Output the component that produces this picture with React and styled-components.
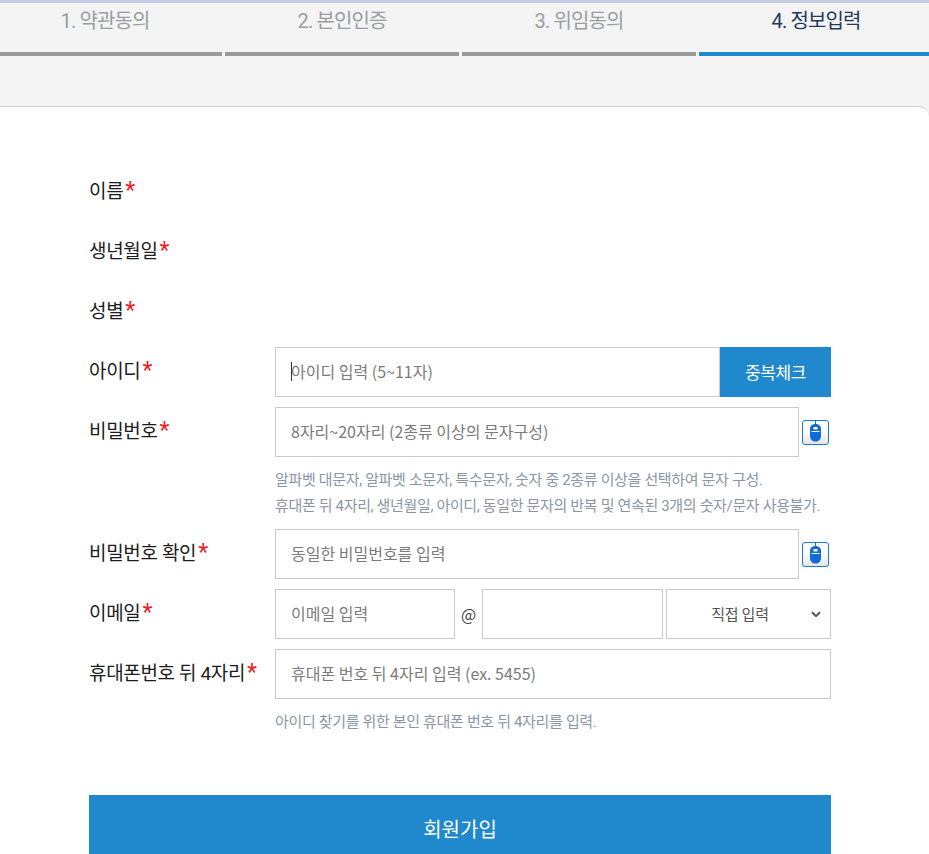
import React from "react";
import styled, { createGlobalStyle } from "styled-components";

const Global = createGlobalStyle`
  html, body { margin: 0; padding: 0; height: 854px; overflow: hidden; background: #fff; }
  * { box-sizing: border-box; }
  #root { height: 854px; overflow: hidden; }
`;

const sans = `Roboto, "Noto Sans CJK KR", sans-serif`;
const field = `"Noto Sans CJK KR", "Noto Sans", sans-serif`;

const Page = styled.div`
  width: 929px;
  height: 854px;
  overflow: hidden;
  background: #f4f4f4;
  border-top: 3px solid #c5cfe3;
  font-family: ${sans};
`;
const Steps = styled.ol`
  display: grid;
  grid-template-columns: repeat(4, 234px);
  gap: 3px;
  margin: 0 0 0 -12px;
  padding: 0;
  list-style: none;
  width: 945px;
`;
const Step = styled.li`
  height: 53px;
  padding-top: 3px;
  border-bottom: 4px solid ${(p) => (p.$active ? "#2088cc" : "#97999b")};
  color: ${(p) => (p.$active ? "#1e3a5c" : "#999ea3")};
  font-size: 20px;
  line-height: 30px;
  font-weight: 400;
  letter-spacing: -0.9px;
  text-align: center;
`;
const Card = styled.main`
  margin: 50px 0 0 -12px;
  height: 760px;
  background: #fff;
  border: 1px solid #cfcfcf;
  border-right: 0;
  border-bottom: 0;
  border-radius: 10px 10px 0 0;
  padding: 60px 98px 0 100px;
  overflow: hidden;
`;
const Form = styled.form`
  display: flex;
  flex-direction: column;
  width: 742px;
`;
const Row = styled.div`
  display: grid;
  grid-template-columns: 186px 1fr;
  height: 60px;
  align-items: start;
`;
const Label = styled.label`
  font-size: 19px;
  line-height: 50px;
  font-weight: 400;
  letter-spacing: -0.35px;
  color: #1c1c1c;
  white-space: nowrap;
`;
const Req = styled.span`
  color: #ee1c25;
  font-size: 23px;
  line-height: 0;
  margin-left: 2px;
`;
const Fields = styled.div`
  display: flex;
  align-items: flex-start;
  position: relative;
`;
const Input = styled.input`
  height: 50px;
  width: ${(p) => p.$w || "100%"};
  flex: ${(p) => (p.$grow ? 1 : "none")};
  min-width: 0;
  border: 1px solid #cacaca;
  padding: 0 15px 2px;
  font: 400 16px ${field};
  letter-spacing: 0;
  color: #333;
  background: #fff;
  outline: none;
  &::placeholder { color: #7b7b7b; opacity: 1; }
`;
const Caret = styled.span`
  position: absolute;
  left: 16px;
  top: 15px;
  width: 1px;
  height: 19px;
  background: #333;
`;
const CheckButton = styled.button`
  width: 111px;
  height: 50px;
  border: 0;
  background: #2088cc;
  color: #fff;
  font: 400 17px ${sans};
  letter-spacing: -0.35px;
  padding: 0 0 2px;
`;
const MouseButton = styled.button`
  width: 27px;
  height: 25px;
  margin: 13px 0 0 3px;
  padding: 0;
  border: 1.5px solid #1a78d8;
  border-radius: 3px;
  background: linear-gradient(#fff 40%, #e4e4e4);
  display: flex;
  align-items: flex-start;
  justify-content: center;
`;
const At = styled.span`
  width: 27px;
  text-align: center;
  font: 400 16px/50px ${field};
  color: #444;
`;
const SelectWrap = styled.div`
  position: relative;
  width: 165px;
  height: 50px;
  margin-left: 3px;
`;
const Select = styled.select`
  appearance: none;
  width: 100%;
  height: 50px;
  border: 1px solid #cacaca;
  border-radius: 0;
  background: #fff;
  padding: 0 25px 2px 8px;
  font: 400 15px ${field};
  letter-spacing: -0.2px;
  color: #555;
  text-align: center;
  text-align-last: center;
`;
const Chevron = styled.svg`
  position: absolute;
  right: 10px;
  top: 22px;
  pointer-events: none;
`;
const Help = styled.p`
  margin: ${(p) => p.$m || "0"};
  padding-left: 186px;
  font: 400 15px/26px ${sans};
  letter-spacing: -0.34px;
  color: #8a96a6;
  white-space: nowrap;
`;
const Submit = styled.button`
  display: block;
  width: 742px;
  height: 66px;
  margin-top: 60px;
  border: 0;
  padding: 0;
  background: #2088cc;
  color: #fff;
  font: 400 20px ${sans};
  letter-spacing: 0;
`;

const MouseIcon = () => (
  <svg width="15" height="22" viewBox="0 0 15 22" aria-hidden="true">
    <path d="M7.500 0v4" stroke="#1a6fd0" strokeWidth="1" />
    <path d="M7.500 3C3.600 3 2 5.400 2 8v7c0 3.500 2.400 5.500 5.500 5.500S13 18.500 13 15V8c0-2.600-1.600-5-5.500-5z" fill="#0f6bd6" />
    <rect x="5.500" y="6" width="4" height="2.500" fill="#fff" />
    <rect x="3.500" y="10" width="8" height="1" fill="#fff" />
  </svg>
);

const Plain = ({ children }) => (
  <Row>
    <Label>
      {children}
      <Req>*</Req>
    </Label>
  </Row>
);

export default function App() {
  return (
    <Page>
      <Global />
      <Steps>
        <Step>1. 약관동의</Step>
        <Step>2. 본인인증</Step>
        <Step>3. 위임동의</Step>
        <Step $active>4. 정보입력</Step>
      </Steps>
      <Card>
        <Form onSubmit={(e) => e.preventDefault()}>
          <Plain>이름</Plain>
          <Plain>생년월일</Plain>
          <Plain>성별</Plain>
          <Row>
            <Label>아이디<Req>*</Req></Label>
            <Fields>
              <Input $grow placeholder="아이디 입력 (5~11자)" />
              <Caret />
              <CheckButton type="button">중복체크</CheckButton>
            </Fields>
          </Row>
          <Row>
            <Label>비밀번호<Req>*</Req></Label>
            <Fields>
              <Input $w="524px" placeholder="8자리~20자리 (2종류 이상의 문자구성)" />
              <MouseButton type="button" aria-label="마우스 입력"><MouseIcon /></MouseButton>
            </Fields>
          </Row>
          <Help>알파벳 대문자, 알파벳 소문자, 특수문자, 숫자 중 2종류 이상을 선택하여 문자 구성.</Help>
          <Help $m="0 0 10px">휴대폰 뒤 4자리, 생년월일, 아이디, 동일한 문자의 반복 및 연속된 3개의 숫자/문자 사용불가.</Help>
          <Row>
            <Label>비밀번호 확인<Req>*</Req></Label>
            <Fields>
              <Input $w="524px" placeholder="동일한 비밀번호를 입력" />
              <MouseButton type="button" aria-label="마우스 입력"><MouseIcon /></MouseButton>
            </Fields>
          </Row>
          <Row>
            <Label>이메일<Req>*</Req></Label>
            <Fields>
              <Input $w="180px" placeholder="이메일 입력" />
              <At>@</At>
              <Input $w="181px" />
              <SelectWrap>
                <Select defaultValue="direct">
                  <option value="direct">직접 입력</option>
                </Select>
                <Chevron width="10" height="7" viewBox="0 0 10 7" aria-hidden="true">
                  <path d="M1 1.200l4 4 4-4" fill="none" stroke="#555" strokeWidth="2" />
                </Chevron>
              </SelectWrap>
            </Fields>
          </Row>
          <Row>
            <Label>휴대폰번호 뒤 4자리<Req>*</Req></Label>
            <Fields>
              <Input placeholder="휴대폰 번호 뒤 4자리 입력 (ex. 5455)" />
            </Fields>
          </Row>
          <Help>아이디 찾기를 위한 본인 휴대폰 번호 뒤 4자리를 입력.</Help>
          <Submit type="button">회원가입</Submit>
        </Form>
      </Card>
    </Page>
  );
}
